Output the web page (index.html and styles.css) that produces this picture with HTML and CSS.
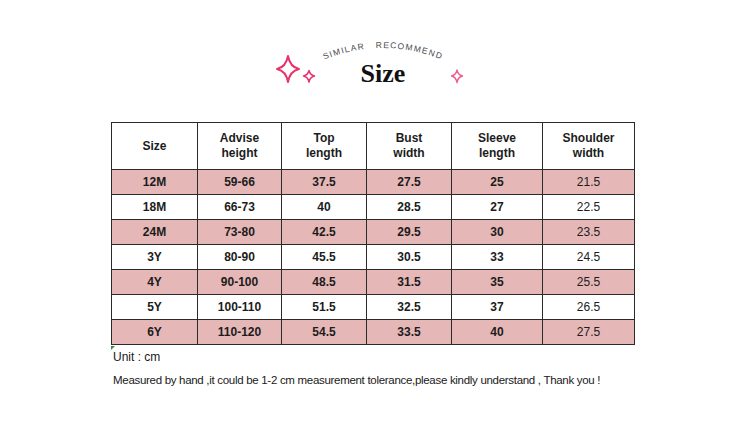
FILE: index.html
```html
<!DOCTYPE html>
<html>
<head>
<meta charset="utf-8">
<link rel="stylesheet" href="styles.css">
</head>
<body>
<div class="page">
  <svg class="banner" width="750" height="122" viewBox="0 0 750 122" xmlns="http://www.w3.org/2000/svg">
    <defs>
      <path id="arc" d="M316,63 Q383,33 450,63" fill="none"/>
    </defs>
    <text class="arc-text"><textPath href="#arc" startOffset="50%" text-anchor="middle">SIMILAR&#160;&#160;&#160;RECOMMEND</textPath></text>
    <text class="size-title" x="383" y="82" text-anchor="middle">Size</text>
    <path d="M288,56 Q290,67 299,69 Q290,71 288,82 Q286,71 277,69 Q286,67 288,56 Z" fill="none" stroke="#e8326b" stroke-width="2" stroke-linejoin="round"/>
    <path d="M309,70.5 Q310,75 314.5,76 Q310,77 309,82 Q308,77 303.5,76 Q308,75 309,70.5 Z" fill="none" stroke="#e8326b" stroke-width="1.5" stroke-linejoin="round"/>
    <path d="M457,70 Q458,75 462.5,76 Q458,77 457,82.5 Q456,77 451.5,76 Q456,75 457,70 Z" fill="none" stroke="#ee5f8f" stroke-width="1.4" stroke-linejoin="round"/>
  </svg>

  <div class="table-wrap">
    <table class="size-table">
      <colgroup>
        <col class="c1"><col class="c2"><col class="c3"><col class="c4"><col class="c5"><col class="c6">
      </colgroup>
      <tr class="head">
        <td>Size</td><td>Advise<br>height</td><td>Top<br>length</td><td>Bust<br>width</td><td>Sleeve<br>length</td><td>Shoulder<br>width</td>
      </tr>
      <tr class="pink"><td>12M</td><td>59-66</td><td>37.5</td><td>27.5</td><td>25</td><td class="reg">21.5</td></tr>
      <tr><td>18M</td><td>66-73</td><td>40</td><td>28.5</td><td>27</td><td class="reg">22.5</td></tr>
      <tr class="pink"><td>24M</td><td>73-80</td><td>42.5</td><td>29.5</td><td>30</td><td class="reg">23.5</td></tr>
      <tr><td>3Y</td><td>80-90</td><td>45.5</td><td>30.5</td><td>33</td><td class="reg">24.5</td></tr>
      <tr class="pink"><td>4Y</td><td>90-100</td><td>48.5</td><td>31.5</td><td>35</td><td class="reg">25.5</td></tr>
      <tr><td>5Y</td><td>100-110</td><td>51.5</td><td>32.5</td><td>37</td><td class="reg">26.5</td></tr>
      <tr class="pink"><td>6Y</td><td>110-120</td><td>54.5</td><td>33.5</td><td>40</td><td class="reg">27.5</td></tr>
    </table>
    <span class="marker"></span>
  </div>

  <p class="note unit">Unit : cm</p>
  <p class="note long">Measured by hand ,it could be 1-2 cm measurement tolerance,please kindly understand , Thank you !</p>
</div>
</body>
</html>
```
FILE: styles.css
```css
html, body {
  margin: 0;
  padding: 0;
  background: #ffffff;
}
.page {
  width: 750px;
  height: 429px;
  display: flex;
  flex-direction: column;
  font-family: "Liberation Sans", Arial, sans-serif;
  color: #1c1c1c;
}
.banner {
  display: block;
  flex: none;
}
.arc-text {
  font-family: "Liberation Sans", Arial, sans-serif;
  font-size: 8.5px;
  letter-spacing: 1.2px;
  fill: #4a4a4a;
}
.size-title {
  font-family: "Liberation Serif", "Times New Roman", serif;
  font-weight: bold;
  font-size: 26px;
  fill: #111;
}
.table-wrap {
  position: relative;
  margin-left: 111px;
  width: 523px;
}
.size-table {
  border-collapse: collapse;
  table-layout: fixed;
  width: 523px;
  border: 1.5px solid #2a2a2a;
}
.c1 { width: 86px; }
.c2 { width: 84px; }
.c3 { width: 85px; }
.c4 { width: 85px; }
.c5 { width: 91px; }
.c6 { width: 92px; }
.size-table td {
  border: 1px solid #2a2a2a;
  text-align: center;
  vertical-align: middle;
  font-size: 12px;
  font-weight: bold;
  height: 24px;
  padding: 0;
  line-height: 15px;
}
.size-table td.reg {
  font-weight: normal;
}
.size-table tr.head td {
  height: 46px;
}
.size-table tr.pink td {
  background: #e5b7b6;
}
.marker {
  position: absolute;
  left: 0;
  bottom: -5px;
  width: 0;
  height: 0;
  border-top: 4px solid #3c8a3c;
  border-right: 4px solid transparent;
}
.note {
  margin: 0 0 0 113px;
  font-size: 12px;
  line-height: 23px;
  color: #202020;
}
.unit {
  margin-top: 1px;
}
.long {
  font-size: 11.5px;
  letter-spacing: -0.3px;
}
```
